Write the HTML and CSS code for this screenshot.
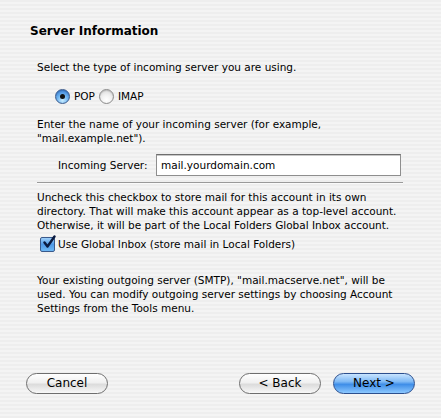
FILE: index.html
```html
<!DOCTYPE html>
<html>
<head>
<meta charset="utf-8">
<link rel="stylesheet" href="styles.css">
</head>
<body>
<div class="page">
  <h1 class="title">Server Information</h1>
  <div class="content">
    <p class="text">Select the type of incoming server you are using.</p>
    <div class="radios">
      <span class="radio on"><span class="dot"></span></span><span class="rlabel">POP</span>
      <span class="radio"></span><span class="rlabel">IMAP</span>
    </div>
    <p class="text para2">Enter the name of your incoming server (for example,<br>"mail.example.net").</p>
    <div class="field-row">
      <span class="flabel">Incoming Server:</span>
      <span class="input">mail.yourdomain.com</span>
    </div>
    <div class="sep"></div>
    <p class="text">Uncheck this checkbox to store mail for this account in its own<br>directory. That will make this account appear as a top-level account.<br>Otherwise, it will be part of the Local Folders Global Inbox account.</p>
    <div class="check-row">
      <span class="checkbox"><svg width="16" height="16" viewBox="0 0 16 16"><path d="M3.5 7.5 L6.5 11.5 L13.5 1.5" fill="none" stroke="#0a1a40" stroke-width="2.4" stroke-linecap="round" stroke-linejoin="round"/></svg></span>
      <span class="clabel">Use Global Inbox (store mail in Local Folders)</span>
    </div>
    <p class="text para4">Your existing outgoing server (SMTP), "mail.macserve.net", will be<br>used. You can modify outgoing server settings by choosing Account<br>Settings from the Tools menu.</p>
  </div>
  <div class="buttons">
    <span class="btn">Cancel</span>
    <span class="spacer"></span>
    <span class="btn">&lt; Back</span>
    <span class="btn default">Next &gt;</span>
  </div>
</div>
</body>
</html>
```

FILE: styles.css
```css
html, body {
  margin: 0;
  padding: 0;
}
body {
  width: 441px;
  height: 418px;
  overflow: hidden;
  background: repeating-linear-gradient(to bottom, #eeeeee 0px, #eeeeee 2px, #f4f4f4 2px, #f4f4f4 4px);
  font-family: "DejaVu Sans", "Lucida Grande", sans-serif;
  color: #000;
}
.page {
  display: flex;
  flex-direction: column;
  height: 418px;
}
.title {
  margin: 23px 0 0 30px;
  font-size: 12px;
  font-weight: bold;
  line-height: 16px;
  letter-spacing: 0;
}
.content {
  padding: 0 38px 0 37px;
  margin-top: 21px;
}
.text {
  margin: 0;
  font-size: 10.5px;
  line-height: 14px;
  white-space: nowrap;
}
.radios {
  display: flex;
  align-items: center;
  margin: 14px 0 0 18px;
  height: 16px;
  font-size: 10.5px;
}
.radio {
  width: 13px;
  height: 13px;
  border-radius: 50%;
  border: 1px solid #8a8a8a;
  background: radial-gradient(circle at 50% 75%, #ffffff 0%, #f2f2f2 40%, #d4d4d4 100%);
  display: flex;
  align-items: center;
  justify-content: center;
  box-shadow: inset 0 1px 1px rgba(0,0,0,0.15);
}
.radio.on {
  border-color: #3a5a8c;
  background: radial-gradient(circle at 50% 80%, #c8ecff 0%, #6fb4f0 45%, #2a6fcf 100%);
}
.dot {
  width: 5px;
  height: 5px;
  border-radius: 50%;
  background: #111;
}
.rlabel {
  margin: 0 4px 0 4px;
}
.para2 {
  margin-top: 13px;
}
.field-row {
  display: flex;
  align-items: center;
  margin: 9px 0 0 21px;
  font-size: 10.5px;
}
.flabel {
  width: 98px;
}
.input {
  box-sizing: border-box;
  width: 245px;
  height: 22px;
  border: 1px solid #8e8e8e;
  border-top-color: #6e6e6e;
  background: #fff;
  box-shadow: inset 0 1px 0 #c8c8c8;
  padding: 3px 0 0 4px;
  line-height: 15px;
}
.sep {
  height: 1px;
  background: #9a9a9a;
  margin: 6px 0 7px 0;
  box-shadow: 0 1px 0 #fafafa;
}
.check-row {
  display: flex;
  align-items: center;
  margin: 4px 0 0 3px;
  font-size: 10.5px;
  height: 16px;
}
.checkbox {
  width: 13px;
  height: 13px;
  border: 1px solid #3a5a8c;
  border-radius: 2px;
  background: linear-gradient(to bottom, #9fd0fa 0%, #4f98e6 50%, #6fb8f4 100%);
  position: relative;
  margin-right: 3px;
}
.checkbox svg {
  position: absolute;
  left: 0px;
  top: -3px;
}
.para4 {
  margin-top: 21px;
}
.buttons {
  margin-top: auto;
  margin-bottom: 24px;
  display: flex;
  padding: 0 26px 0 26px;
  gap: 12px;
}
.spacer {
  flex: 1;
}
.btn {
  box-sizing: border-box;
  width: 82px;
  height: 21px;
  border: 1px solid #6e6e6e;
  border-radius: 11px;
  background: linear-gradient(to bottom, #ffffff 0%, #f0f0f0 45%, #dcdcdc 55%, #f8f8f8 100%);
  font-size: 12px;
  display: flex;
  align-items: center;
  justify-content: center;
  line-height: 19px;
}
.btn.default {
  border-color: #2c4f8e;
  background: linear-gradient(to bottom, #c8e4ff 0%, #7fb9f5 40%, #3f8ee8 55%, #8cc8ff 100%);
}
```
